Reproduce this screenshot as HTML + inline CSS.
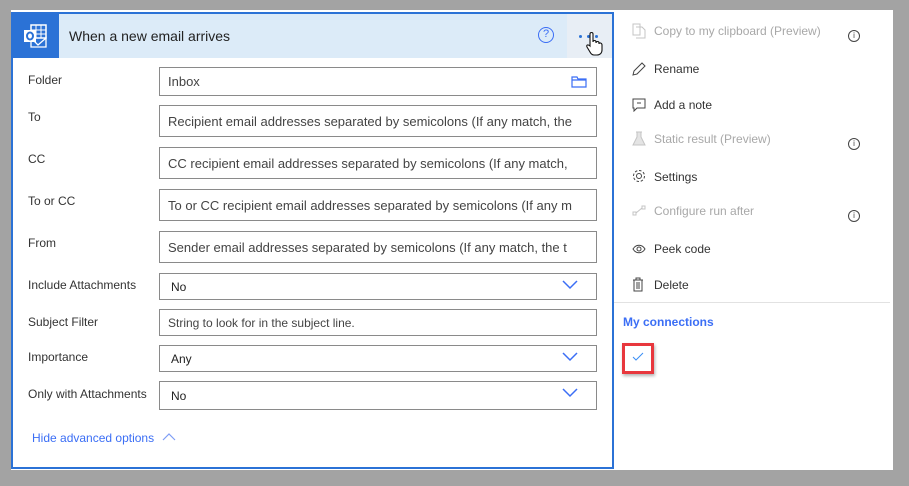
<!DOCTYPE html>
<html><head><style>
*{box-sizing:border-box;margin:0;padding:0}
body{width:909px;height:486px;background:#a3a3a3;position:relative;overflow:hidden;font-family:"Liberation Sans",sans-serif;}
.abs{position:absolute}
.lbl{position:absolute;left:28px;font-size:12px;color:#333}
.inp{position:absolute;left:159px;width:438px;border:1px solid #8a8a8a;background:#fff;font-size:13px;color:#444;padding-left:8px;white-space:nowrap;overflow:hidden;display:flex;align-items:center}
.mi{position:absolute;left:654px;font-size:12px;color:#333}
.dis{color:#a8a8a8}
.ic{position:absolute;left:632px}
.info{position:absolute;left:848px;width:12px;height:12px;border:1px solid #444;border-radius:50%;font-size:8px;text-align:center;line-height:10px;color:#444}
.chev{position:absolute;right:18px;top:6px}
.dot{position:absolute;width:3px;height:3px;border-radius:50%;background:#2b72d6}
</style></head><body>
<div class="abs" style="left:11px;top:10px;width:882px;height:460px;background:#fff"></div>
<div class="abs" style="left:893px;top:10px;width:16px;height:476px;background:#a3a3a3"></div>
<!-- card -->
<div class="abs" style="left:11px;top:12px;width:603px;height:457px;border:2px solid #2b72d6;background:#fff"></div>
<div class="abs" style="left:13px;top:14px;width:599px;height:44px;background:#dcebf8"></div>
<div class="abs" style="left:13px;top:14px;width:46px;height:44px;background:#2b72d6"></div>
<svg class="abs" style="left:22px;top:22px" width="28" height="28" viewBox="0 0 28 28">
<rect x="9" y="3" width="15" height="13" fill="none" stroke="#fff" stroke-width="1.5"/>
<path d="M9 8h15M9 12h15M14 3v13M19 3v13" stroke="#fff" stroke-width="1"/>
<path d="M9 16l7 7 8-7v9H9z" fill="none" stroke="#fff" stroke-width="1.3"/>
<rect x="2" y="8" width="12" height="12" fill="#fff"/>
<ellipse cx="8" cy="14" rx="3" ry="3.5" fill="none" stroke="#2b72d6" stroke-width="2"/>
</svg>
<div class="abs" style="left:69px;top:28px;font-size:14px;color:#222">When a new email arrives</div>
<div class="abs" style="left:538px;top:27px;width:16px;height:16px;border:1.5px solid #3b6ef5;border-radius:50%;color:#3b6ef5;font-size:11px;text-align:center;line-height:13px">?</div>
<div class="abs" style="left:567px;top:14px;width:45px;height:44px;background:#e8eef5"></div>
<div class="dot" style="left:579px;top:35px"></div>
<div class="dot" style="left:587px;top:35px"></div>
<div class="dot" style="left:595px;top:35px"></div>
<svg class="abs" style="left:585px;top:30px" width="18" height="26" viewBox="0 0 18 26"><path d="M5 16V4c0-2 3-2 3 0v8c0-2 3-2 3 0v1c0-2 3-2 3 0v1c0-2 3-1 3 1v5c0 3-2 5-5 5H9c-2 0-3-1-4-3l-3-5c-1-2 1-3 3-1z" fill="#fff" stroke="#111" stroke-width="1.1"/></svg>

<div class="lbl" style="top:73px">Folder</div>
<div class="inp" style="top:67px;height:29px">Inbox
<svg class="abs" style="right:9px;top:7px" width="16" height="13" viewBox="0 0 16 13"><path d="M1 2h5l1 2h8v8H1z M1 5h14" fill="none" stroke="#3b6ef5" stroke-width="1.2"/></svg></div>
<div class="lbl" style="top:110px">To</div>
<div class="inp" style="top:105px;height:32px">Recipient email addresses separated by semicolons (If any match, the</div>
<div class="lbl" style="top:152px">CC</div>
<div class="inp" style="top:147px;height:32px">CC recipient email addresses separated by semicolons (If any match,</div>
<div class="lbl" style="top:194px">To or CC</div>
<div class="inp" style="top:189px;height:32px">To or CC recipient email addresses separated by semicolons (If any m</div>
<div class="lbl" style="top:236px">From</div>
<div class="inp" style="top:231px;height:32px">Sender email addresses separated by semicolons (If any match, the t</div>
<div class="lbl" style="top:278px">Include Attachments</div>
<div class="inp" style="top:273px;height:27px;padding-left:11px;font-size:12px;color:#222">No<svg class="chev" width="16" height="10" viewBox="0 0 16 10"><path d="M1 1l7 7 7-7" fill="none" stroke="#3b6ef5" stroke-width="1.5"/></svg></div>
<div class="lbl" style="top:315px">Subject Filter</div>
<div class="inp" style="top:309px;height:27px;font-size:12px">String to look for in the subject line.</div>
<div class="lbl" style="top:350px">Importance</div>
<div class="inp" style="top:345px;height:27px;padding-left:11px;font-size:12px;color:#222">Any<svg class="chev" width="16" height="10" viewBox="0 0 16 10"><path d="M1 1l7 7 7-7" fill="none" stroke="#3b6ef5" stroke-width="1.5"/></svg></div>
<div class="lbl" style="top:387px">Only with Attachments</div>
<div class="inp" style="top:381px;height:29px;padding-left:11px;font-size:12px;color:#222">No<svg class="chev" width="16" height="10" viewBox="0 0 16 10"><path d="M1 1l7 7 7-7" fill="none" stroke="#3b6ef5" stroke-width="1.5"/></svg></div>
<div class="abs" style="left:32px;top:431px;font-size:12px;color:#3b6ef5">Hide advanced options</div>
<svg class="abs" style="left:162px;top:433px" width="14" height="8" viewBox="0 0 14 8"><path d="M1 7l6-6 6 6" fill="none" stroke="#7f9ef5" stroke-width="1.2"/></svg>

<!-- menu -->
<svg class="ic" style="top:23px" width="14" height="16" viewBox="0 0 14 16"><path d="M1 1h7v11H1z M4 4h6l3 3v8H4" fill="none" stroke="#c4c4c4"/></svg>
<div class="mi dis" style="top:24px">Copy to my clipboard (Preview)</div><div class="info" style="top:30px">i</div>
<svg class="ic" style="top:62px" width="14" height="14" viewBox="0 0 14 14"><path d="M1 13l1-4 8-8 3 3-8 8z" fill="none" stroke="#444"/></svg>
<div class="mi" style="top:62px">Rename</div>
<svg class="ic" style="top:98px" width="14" height="14" viewBox="0 0 14 14"><path d="M1 1h12v9H5l-3 3v-3H1z" fill="none" stroke="#444"/><path d="M6 4v2M8 4v2" stroke="#444"/></svg>
<div class="mi" style="top:98px">Add a note</div>
<svg class="ic" style="top:131px" width="14" height="15" viewBox="0 0 14 15"><path d="M4 1h6M5 1v5l-4 8h12l-4-8V1" fill="#e4e4e4" stroke="#c4c4c4"/></svg>
<div class="mi dis" style="top:132px">Static result (Preview)</div><div class="info" style="top:138px">i</div>
<svg class="ic" style="top:169px" width="14" height="14" viewBox="0 0 14 14"><circle cx="7" cy="7" r="2.5" fill="none" stroke="#444"/><circle cx="7" cy="7" r="5.5" fill="none" stroke="#444" stroke-dasharray="2.5 1.8"/></svg>
<div class="mi" style="top:170px">Settings</div>
<svg class="ic" style="top:205px" width="14" height="12" viewBox="0 0 14 12"><rect x="1" y="7" width="3" height="3" fill="none" stroke="#c4c4c4"/><rect x="10" y="1" width="3" height="3" fill="none" stroke="#c4c4c4"/><path d="M4 8l6-5" stroke="#c4c4c4"/></svg>
<div class="mi dis" style="top:204px">Configure run after</div><div class="info" style="top:210px">i</div>
<svg class="ic" style="top:244px" width="14" height="10" viewBox="0 0 14 10"><path d="M1 5c3-5 9-5 12 0c-3 5-9 5-12 0z" fill="none" stroke="#444"/><circle cx="7" cy="5" r="2" fill="none" stroke="#444"/></svg>
<div class="mi" style="top:242px">Peek code</div>
<svg class="ic" style="top:277px" width="12" height="15" viewBox="0 0 12 15"><path d="M1 3h10M4 3V1h4v2M2 3v11h8V3M5 5v7M7 5v7" fill="none" stroke="#444"/></svg>
<div class="mi" style="top:278px">Delete</div>
<div class="abs" style="left:614px;top:302px;width:276px;height:1px;background:#e2e2e2"></div>
<div class="abs" style="left:623px;top:315px;font-size:12px;font-weight:bold;color:#3b6ef5">My connections</div>
<div class="abs" style="left:622px;top:343px;width:32px;height:31px;border:3px solid #e8373d;box-shadow:1px 2px 3px rgba(0,0,0,.3)"></div>
<svg class="abs" style="left:632px;top:352px" width="12" height="10" viewBox="0 0 12 10"><path d="M1 5l3 3 7-7" fill="none" stroke="#3b8ef5" stroke-width="1"/></svg>
</body></html>
